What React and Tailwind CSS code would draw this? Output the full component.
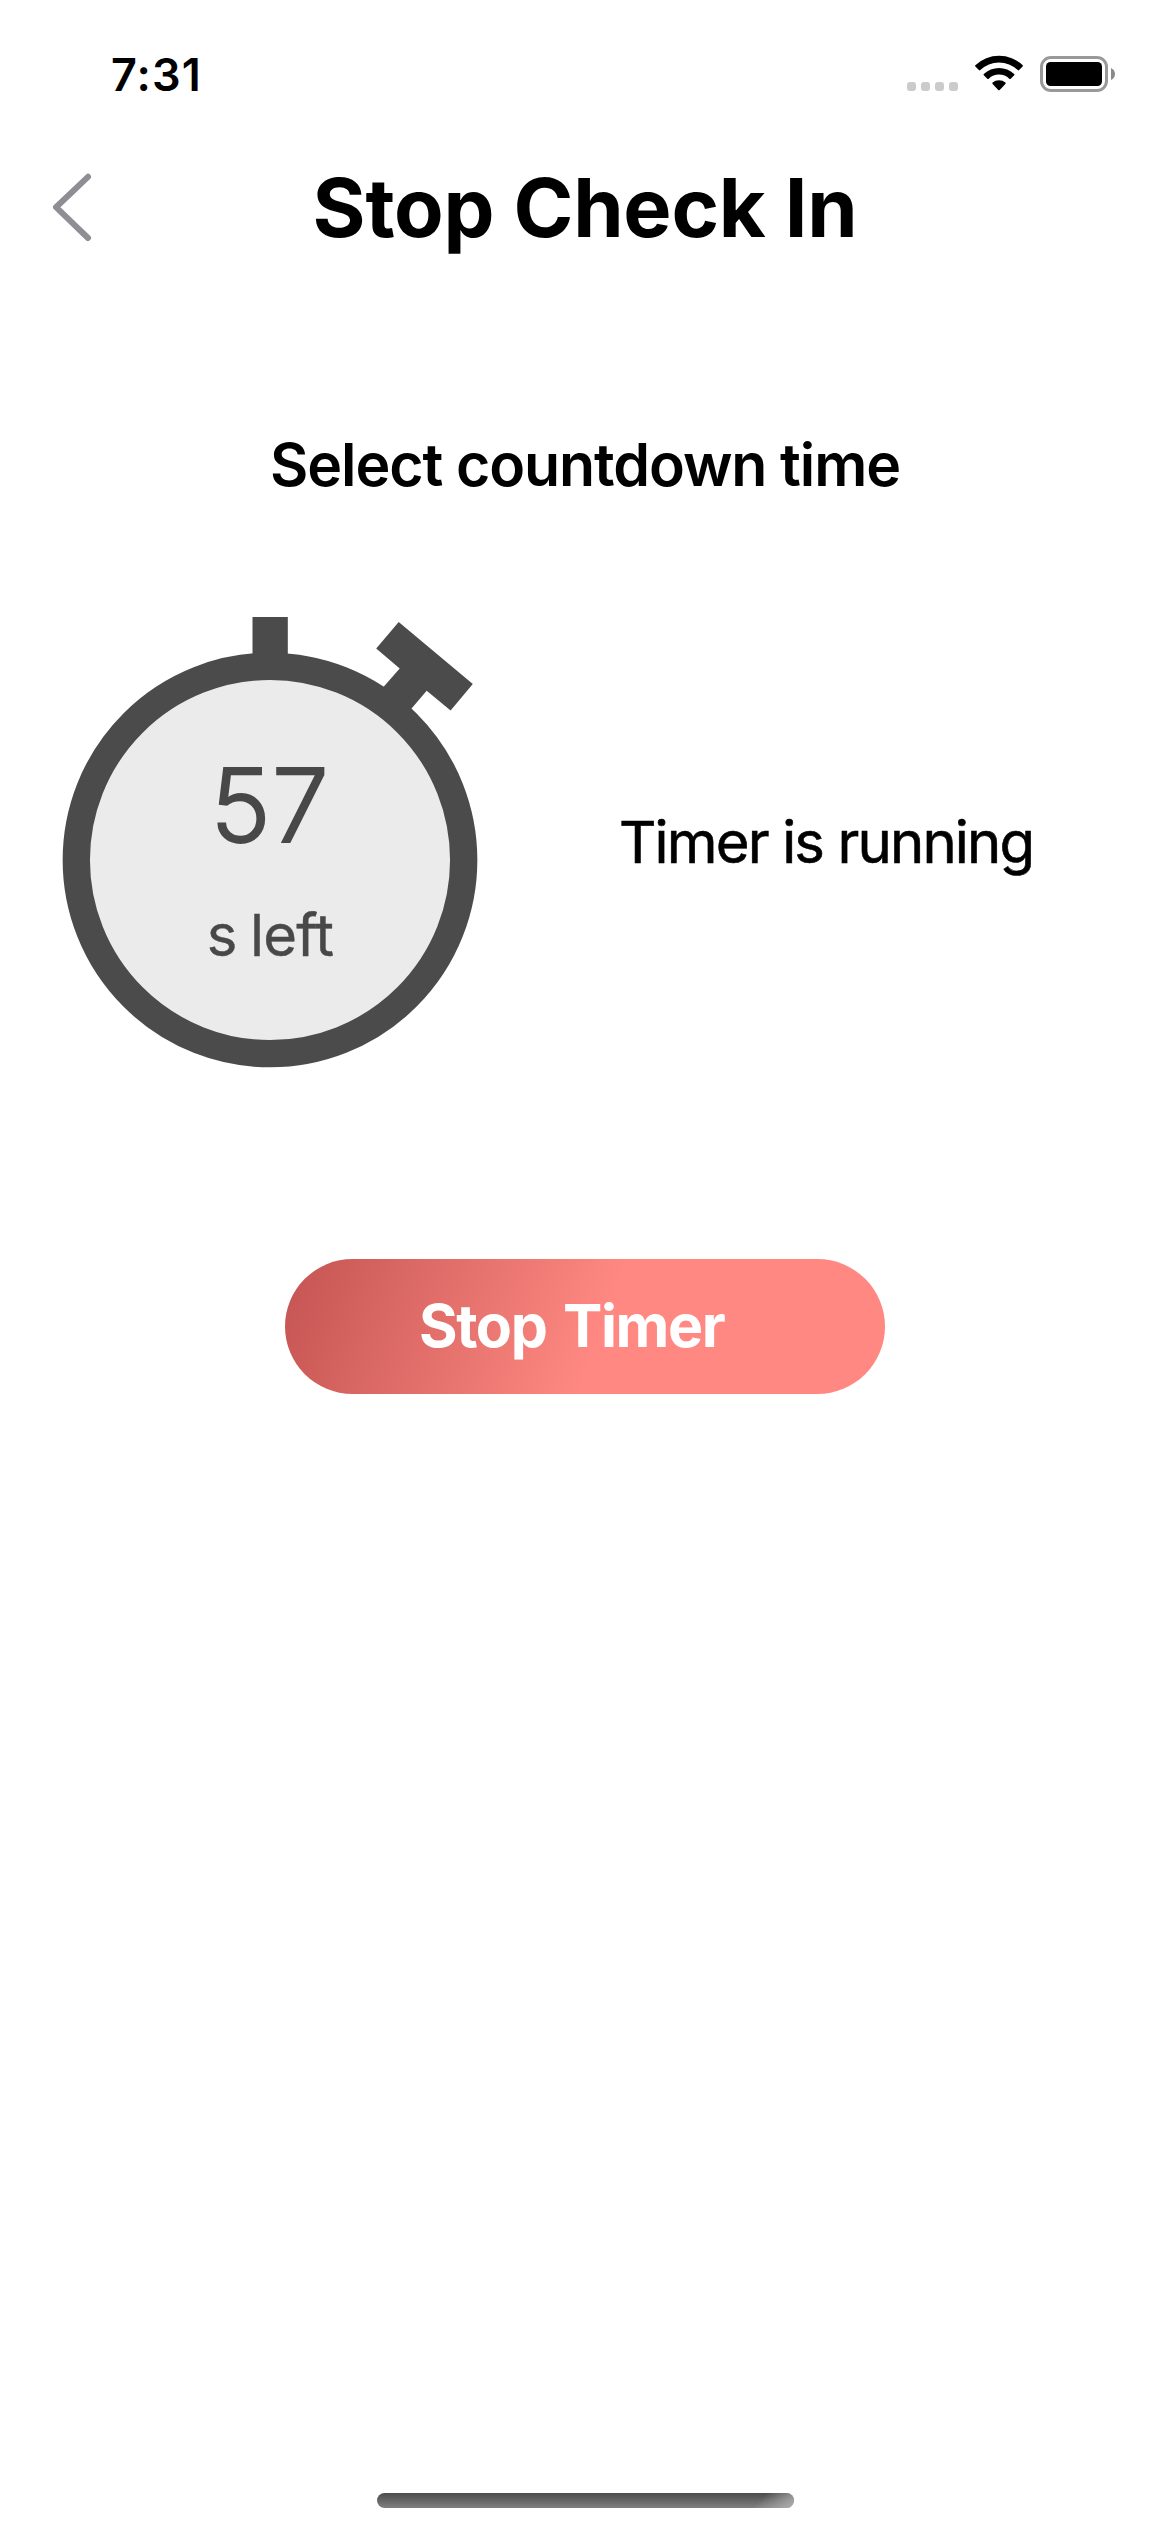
import React from "react";

function StatusBar() {
  return (
    <div className="flex h-[150px] items-start pl-[111px] pr-[55px] pt-[52px]">
      <span className="text-[45px] font-semibold leading-none tracking-[1.1px]">7:31</span>
      <div className="ml-auto flex items-start">
        <div className="mt-[30px] flex gap-[5px]">
          <i className="size-[9px] rounded-[3px] bg-[#cbcbcb]" />
          <i className="size-[9px] rounded-[3px] bg-[#cbcbcb]" />
          <i className="size-[9px] rounded-[3px] bg-[#cbcbcb]" />
          <i className="size-[9px] rounded-[3px] bg-[#cbcbcb]" />
        </div>
        <svg className="ml-[17px] mt-[3px]" width="48" height="36" viewBox="0 0 48 36">
          <path d="M0.3 10.3 A34.2 34.2 0 0 1 47.7 10.3 Q48.2 10.9 47.6 11.6 L44.1 15.1 Q43.4 15.7 42.7 15.1 A27 27 0 0 0 5.3 15.1 Q4.6 15.7 3.9 15.1 L0.4 11.6 Q-0.2 10.9 0.3 10.3Z" />
          <path d="M8.8 19 A22 22 0 0 1 39.2 19 Q39.8 19.6 39.2 20.2 L35.7 23.7 Q35 24.3 34.3 23.7 A15 15 0 0 0 13.7 23.7 Q13 24.3 12.3 23.7 L8.8 20.2 Q8.2 19.6 8.8 19Z" />
          <path d="M17.6 27.6 A9.8 9.8 0 0 1 30.4 27.6 Q31 28.2 30.4 28.9 L24.7 34.9 Q24 35.6 23.3 34.9 L17.6 28.9 Q17 28.2 17.6 27.6Z" />
        </svg>
        <svg className="ml-[17px] mt-[4px]" width="75" height="36" viewBox="0 0 75 36">
          <rect x="1.5" y="1.5" width="65" height="33" rx="9.5" fill="none" stroke="#999" strokeWidth="3" />
          <rect x="6" y="6" width="56" height="24" rx="4.5" />
          <path d="M71 12 Q75 14 75 18 Q75 22 71 24Z" fill="#8a8a8a" />
        </svg>
      </div>
    </div>
  );
}

function Header() {
  return (
    <div className="grid h-[120px] grid-cols-[150px_1fr_150px] items-start">
      <svg className="ml-[50px] mt-[20px]" width="44" height="74" viewBox="0 0 44 74" fill="none" stroke="#8e8e93" strokeWidth="6" strokeLinecap="round" strokeLinejoin="round">
        <path d="M38 6.8 L6 37.2 L38 68" />
      </svg>
      <h1 className="mt-[17.5px] whitespace-nowrap text-center text-[81px] font-bold leading-none tracking-[-0.2px]">Stop Check In</h1>
    </div>
  );
}

function Stopwatch() {
  return (
    <div className="grid h-[467px] w-[440px] shrink-0">
      <svg className="col-start-1 row-start-1" width="440" height="480" viewBox="0 0 440 480">
        <rect x="202.5" y="17" width="35.3" height="45" fill="#4b4b4b" />
        <path d="M348.7 22 L422.8 84 L400.6 110.5 L376.7 90.7 L350 122 L322 100 L349.7 68.5 L326.2 48.6Z" fill="#4b4b4b" />
        <circle cx="220" cy="260" r="193.7" fill="#ebebeb" stroke="#4b4b4b" strokeWidth="27.3" />
      </svg>
      <div className="col-start-1 row-start-1 flex flex-col items-center pt-[154px] text-[#484848]">
        <span className="text-[102px] font-light leading-[103px] tracking-[1px] [-webkit-text-stroke:1.8px_#484848]">57</span>
        <span className="mt-[49px] text-[58px] leading-none tracking-[-0.8px] [-webkit-text-stroke:0.4px_#484848] [word-spacing:-2px]">s left</span>
      </div>
    </div>
  );
}

export default function App() {
  return (
    <div className="flex h-[2532px] w-[1170px] flex-col bg-white font-['Inter',sans-serif] text-black">
      <StatusBar />
      <Header />
      <h2 className="mt-[165px] text-center text-[59px] font-semibold leading-none tracking-[-1.1px]">Select countdown time</h2>
      <div className="mt-[106px] flex items-start pl-[50px]">
        <Stopwatch />
        <p className="ml-[129px] mt-[213px] whitespace-nowrap text-[58px] leading-none tracking-[-1.85px] [-webkit-text-stroke:0.6px_#000]">Timer is running</p>
      </div>
      <button className="ml-[285px] mt-[192px] flex h-[135px] w-[600px] items-start whitespace-nowrap rounded-full bg-[linear-gradient(110deg,#c45452_0%,#ff8982_53%,#ff8982_100%)] pl-[134px] pt-[37px] text-[59px] font-bold leading-none tracking-[-1.4px] text-white [word-spacing:4px]">
        Stop Timer
      </button>
      <div className="mb-[24px] ml-[377px] mt-auto h-[15px] w-[417px] rounded-full bg-linear-to-b from-[#4c4c4c] to-[#808080]">
        <div className="ml-auto h-full w-[50px] rounded-r-full bg-[linear-gradient(135deg,transparent_35%,#b0b0b0_100%)]" />
      </div>
    </div>
  );
}
